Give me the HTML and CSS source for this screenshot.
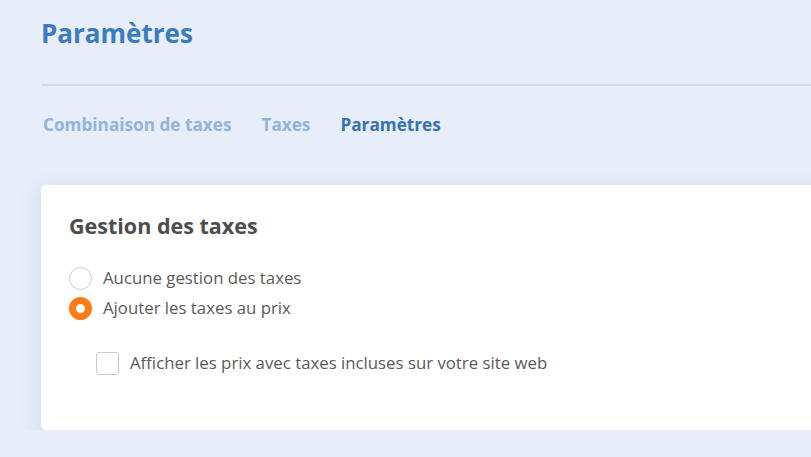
FILE: index.html
```html
<!DOCTYPE html>
<html>
  <head>
    <meta charset="UTF-8" />
    <title>Paramètres</title>
    <link rel="stylesheet" href="styles.css">
  </head>

  <body>
    <div class="page">
      <div class="page-header">
        <h1>Paramètres</h1>
      </div>

      <div class="tabs">
        <a class="tab" href="#">Combinaison de taxes</a>
        <a class="tab" href="#">Taxes</a>
        <a class="tab active" href="#">Paramètres</a>
      </div>

      <div class="card">
        <h3>Gestion des taxes</h3>
        <div class="radio-list">
          <label class="radio">
            <span class="radio-mark"></span>
            Aucune gestion des taxes
          </label>
          <label class="radio checked">
            <span class="radio-mark"></span>
            Ajouter les taxes au prix
          </label>
        </div>
        <label class="check">
          <span class="check-mark"></span>
          Afficher les prix avec taxes incluses sur votre site web
        </label>
      </div>
    </div>
  </body>
</html>
```

FILE: styles.css
```css
* {
  box-sizing: border-box;
}

body {
  margin: 0;
  font-family: "Open Sans", sans-serif;
  background-color: #e7edf9;
  overflow: hidden;
}

.page {
  padding: 0 0 0 41px;
  margin-right: -40px;
}

.page-header {
  height: 86px;
  border-bottom: 2px solid #d4dcea;
  padding-top: 15px;
}

.page-header h1 {
  margin: 0;
  font-size: 26px;
  font-weight: 700;
  color: #3b7cc0;
  line-height: 36px;
}

.tabs {
  display: flex;
  gap: 30px;
  padding: 27px 0 0 2px;
  height: 99px;
}

.tab {
  font-size: 17.2px;
  font-weight: 700;
  color: #92b4dc;
  text-decoration: none;
  line-height: 24px;
}

.tab.active {
  color: #3572b4;
}

.card {
  background-color: #fff;
  border-radius: 5px;
  box-shadow: 0 6px 20px rgba(120, 150, 210, 0.25);
  padding: 26px 28px 56px;
  height: 245px;
}

.card h3 {
  margin: 0 0 25px;
  font-size: 21.5px;
  font-weight: 700;
  color: #4d4d4d;
  line-height: 30px;
}

.radio-list {
  display: flex;
  flex-direction: column;
  gap: 6px;
  margin-bottom: 31px;
}

.radio,
.check {
  display: flex;
  align-items: center;
  gap: 11px;
  font-size: 16.8px;
  color: #5a5a5a;
  line-height: 24px;
}

.radio-mark {
  flex: none;
  width: 23px;
  height: 23px;
  border-radius: 50%;
  border: 1px solid #c5cbd6;
  background-color: #fff;
}

.radio.checked .radio-mark {
  border: 7px solid #ff7b17;
}

.check {
  margin-left: 27px;
}

.check-mark {
  flex: none;
  width: 23px;
  height: 23px;
  border-radius: 3px;
  border: 1px solid #c5cbd6;
}
```
